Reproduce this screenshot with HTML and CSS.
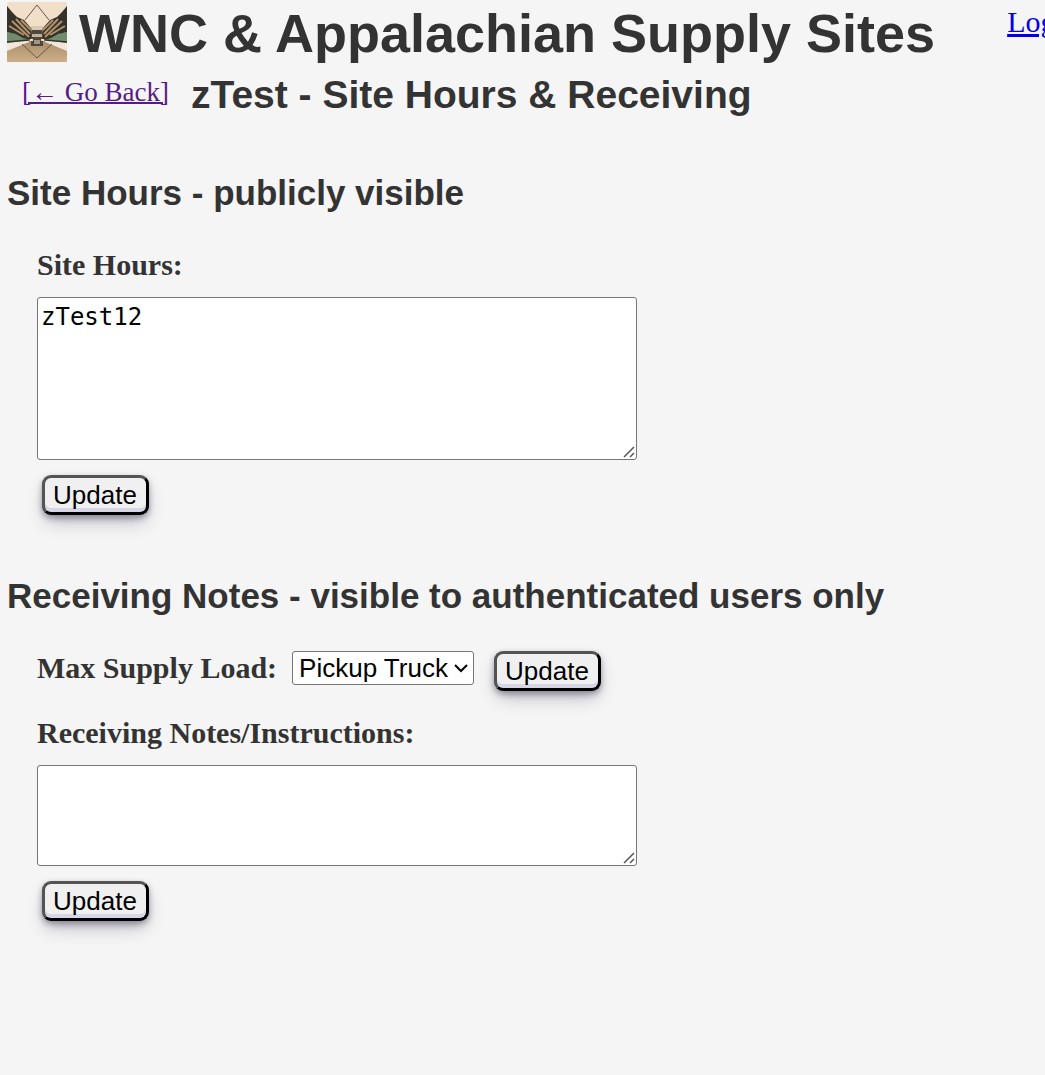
FILE: index.html
```html
<!DOCTYPE html>
<html lang="en">
<head>
<meta charset="utf-8">
<title>zTest - Site Hours &amp; Receiving</title>
<link rel="stylesheet" href="styles.css">
</head>
<body>
<header class="banner">
  <svg class="logo" viewBox="0 0 60 60" role="img" aria-label="Truck on a mountain road">
    <defs>
      <linearGradient id="ground" x1="0" y1="0" x2="0" y2="1">
        <stop offset="0" stop-color="#a88c67"/>
        <stop offset="1" stop-color="#cdb08a"/>
      </linearGradient>
      <filter id="soft"><feGaussianBlur stdDeviation="0.6"/></filter>
    </defs>
    <rect width="60" height="60" rx="2" fill="#f2dfca"/>
    <g filter="url(#soft)">
      <path d="M0 30L12 32L24 38L0 42ZM60 30L48 32L36 38L60 42Z" fill="#718c6c"/>
      <path d="M0 48L22 38H38L60 48V60H0Z" fill="url(#ground)"/>
      <path d="M0 41L22 38V40L0 49ZM60 41L38 38V40L60 49Z" fill="#f0e6da"/>
      <path d="M0 4L5 10L10 15L17 18L24 26V38L16 36L9 32L0 30ZM60 4L55 10L50 15L43 18L36 26V38L44 36L51 32L60 30Z" fill="#35302c"/>
      <path d="M9 17L23 32M14 18L24 28M5 19L22 35M2 24L17 33M51 17L37 32M46 18L36 28M55 19L38 35M58 24L43 33" fill="none" stroke="#b29268" stroke-width="2"/>
      <path d="M0 40L22 38M60 40L38 38" stroke="#35362f" stroke-width="1.3"/>
      <path d="M18 18L30 3L42 18M15 42L30 56L45 42" fill="none" stroke="#625448" stroke-width="1"/>
      <path d="M25 24H35L36 31V44H24V31Z" fill="#4f463e"/>
      <path d="M25 24H35V28H25Z" fill="#d9c9b0"/>
      <path d="M25 32H35V35H25Z" fill="#c0b19c"/>
      <path d="M27 38H33V42H27Z" fill="#a5947e"/>
      <path d="M23 37H26V39H23ZM34 37H37V39H34Z" fill="#eee1cc"/>
    </g>
  </svg>
  <h1 class="site-name">WNC &amp; Appalachian Supply Sites</h1>
  <a class="login" href="#login">Login</a>
</header>
<div class="title-row">
  <a class="back" href="#back">[← Go Back]</a>
  <h2 class="page-title">zTest - Site Hours &amp; Receiving</h2>
</div>
<main>
  <section class="section">
    <h3 class="section-title">Site Hours - publicly visible</h3>
    <form class="fields">
      <label class="label" for="hours">Site Hours:</label>
      <textarea class="notes notes-tall" id="hours" spellcheck="false">zTest12</textarea>
      <button class="update" type="button">Update</button>
    </form>
  </section>
  <section class="section">
    <h3 class="section-title">Receiving Notes - visible to authenticated users only</h3>
    <form class="fields">
      <div class="load-row">
        <label class="label" for="load">Max Supply Load:</label>
        <select class="load" id="load"><option>Pickup Truck</option></select>
        <button class="update" type="button">Update</button>
      </div>
      <label class="label" for="receiving">Receiving Notes/Instructions:</label>
      <textarea class="notes" id="receiving"></textarea>
      <button class="update" type="button">Update</button>
    </form>
  </section>
</main>
</body>
</html>
```
FILE: styles.css
```css
* { box-sizing: border-box; }
body {
  margin: 0;
  padding: 2px 0 32px 7px;
  background: #f5f5f5;
  color: #333;
  font-family: "Liberation Serif", "Times New Roman", serif;
  font-size: 30px;
}
h1, h2, h3 { margin: 0; font-family: "Liberation Sans", Arial, sans-serif; }
.banner {
  display: flex;
  align-items: flex-start;
  gap: 12px;
  overflow: hidden;
  white-space: nowrap;
}
.logo { flex: none; width: 60px; height: 60px; }
.site-name { font-size: 54px; line-height: 62px; }
.login { margin-left: 60px; line-height: 40px; color: #00e; }
.title-row {
  display: flex;
  align-items: flex-start;
  gap: 22px;
  padding-left: 15px;
}
.back { font-size: 27px; line-height: 56px; color: #551a8b; text-decoration-thickness: 2px; }
.page-title { font-size: 39px; line-height: 62px; }
.section { padding-top: 47px; }
.section-title { font-size: 35px; line-height: 40px; }
.fields {
  display: flex;
  flex-direction: column;
  align-items: flex-start;
  padding: 32px 30px 14px;
}
.label { font-weight: bold; line-height: 40px; }
.notes {
  width: 600px;
  max-width: 100%;
  height: 101px;
  margin: 12px 0 15px;
  padding: 4px 3px;
  border: 1px solid #767676;
  border-radius: 3px;
  background: #fff;
  color: #000;
  font: 24px/30px "DejaVu Sans Mono", monospace;
}
.notes-tall { height: 163px; }
.notes::-webkit-resizer {
  background: url("data:image/svg+xml,%3Csvg xmlns='http://www.w3.org/2000/svg' width='15' height='15'%3E%3Cpath d='M3 13L13 3M9 13L13 9' stroke='%23555' stroke-width='1.5'/%3E%3C/svg%3E") no-repeat right bottom;
}
.update {
  height: 40px;
  margin-left: 5px;
  padding: 0 9px 0 8px;
  border: 3px outset #000;
  border-radius: 9px;
  background: #f0f0f0;
  color: #000;
  font: 26px/30px "Liberation Sans", Arial, sans-serif;
  box-shadow: rgba(45, 35, 66, .4) 0 3px 6px, rgba(45, 35, 66, .3) 0 10px 18px -4px, #d6d6e7 0 -4px 0 inset;
}
.load-row {
  display: flex;
  align-items: flex-start;
  gap: 15px;
  margin: 3px 0 22px;
}
.load-row .label { line-height: 34px; }
.load {
  appearance: none;
  height: 34px;
  padding: 0 24px 0 6px;
  border: 1px solid #767676;
  border-radius: 3px;
  background: #fff url("data:image/svg+xml,%3Csvg xmlns='http://www.w3.org/2000/svg' width='14' height='10'%3E%3Cpath d='M1 2L7 8L13 2' fill='none' stroke='%23000' stroke-width='2'/%3E%3C/svg%3E") no-repeat right 5px center;
  color: #000;
  font: 26px/30px "Liberation Sans", Arial, sans-serif;
}
```
